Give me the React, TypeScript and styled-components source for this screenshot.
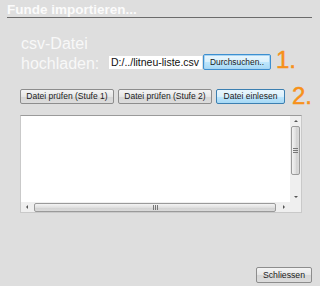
import React from "react";
import styled, { createGlobalStyle, css } from "styled-components";

const GlobalStyle = createGlobalStyle`
  html, body {
    margin: 0;
    padding: 0;
    background: #dedede;
  }
  body {
    font-family: "Liberation Sans", Arial, sans-serif;
  }
`;

const Dialog = styled.div`
  width: 320px;
  height: 286px;
  box-sizing: border-box;
  padding: 2px 8px 0 7px;
  display: flex;
  flex-direction: column;
  background: #dedede;
`;

const Title = styled.h1`
  margin: 0;
  font-size: 13.5px;
  line-height: 15px;
  font-weight: bold;
  color: #fbfbfb;
  border-bottom: 1px solid #6b6b6b;
`;

const UploadRow = styled.div`
  display: flex;
  align-items: flex-end;
  margin: 16px 0 0 14px;
`;

const UploadLabel = styled.div`
  font-size: 16px;
  line-height: 20px;
  color: #f8f8f8;
  width: 88px;
`;

const FileGroup = styled.div`
  display: flex;
  align-items: center;
  margin-bottom: 4px;
`;

const FileName = styled.div`
  width: 93px;
  height: 13px;
  box-sizing: border-box;
  background: #fff;
  font-size: 10.5px;
  line-height: 13px;
  padding-left: 2px;
  color: #111;
  white-space: nowrap;
  overflow: hidden;
`;

const buttonBase = css`
  box-sizing: border-box;
  font-family: "Liberation Sans", Arial, sans-serif;
  font-size: 8.5px;
  color: #1a1a1a;
  border: 1px solid #8d8d8d;
  border-radius: 2px;
  background: linear-gradient(#f4f4f4, #e6e6e6 50%, #d6d6d6 51%, #dcdcdc);
  padding: 0;
  white-space: nowrap;
`;

const BrowseButton = styled.button`
  ${buttonBase}
  width: 68px;
  height: 16px;
  margin-left: 1px;
  border: 1px solid #3d8fd0;
  box-shadow: inset 0 0 0 1px #a9d4f2;
  background: linear-gradient(#eaf6fd, #d9f0fc 50%, #bee6fd 51%, #a7d9f5);
  font-size: 8.4px;
`;

const StepNumber = styled.span`
  font-size: 24px;
  line-height: 24px;
  color: #f7911a;
  -webkit-text-stroke: 0.5px #f7911a;
  font-family: "Liberation Sans", Arial, sans-serif;
`;

const StepOne = styled(StepNumber)`
  margin: 0 0 2px 5px;
`;

const ActionRow = styled.div`
  display: flex;
  align-items: center;
  margin: 10px 0 0 13px;
  gap: 4px;
`;

const ActionButton = styled.button<{ $primary?: boolean }>`
  ${buttonBase}
  height: 15px;
  width: ${(p) => (p.$primary ? "69px" : "94px")};
  ${(p) =>
    p.$primary &&
    css`
      border-color: #3c7fb1;
      background: linear-gradient(#eaf6fd, #d9f0fc 50%, #bee6fd 51%, #a7d9f5);
    `}
`;

const StepTwo = styled(StepNumber)`
  margin-left: 3px;
`;

const Output = styled.div`
  margin: 7px 0 0 13px;
  width: 282px;
  height: 98px;
  box-sizing: border-box;
  border: 1px solid #c9c9c9;
  border-top-color: #9a9a9a;
  background: #fff;
  display: grid;
  grid-template-columns: 1fr 11px;
  grid-template-rows: 1fr 10px;
`;

const Track = styled.div<{ $vertical?: boolean }>`
  background: #efefef;
  display: flex;
  flex-direction: ${(p) => (p.$vertical ? "column" : "row")};
  align-items: center;
`;

const Corner = styled.div`
  background: #efefef;
`;

const Arrow = styled.span<{ $dir: "up" | "down" | "left" | "right" }>`
  width: 0;
  height: 0;
  flex: none;
  border: 2px solid transparent;
  ${(p) =>
    p.$dir === "up"
      ? css`
          border-bottom: 2px solid #555;
          border-top-width: 0;
          margin: 4px 0 0;
        `
      : p.$dir === "down"
        ? css`
            border-top: 2px solid #555;
            border-bottom-width: 0;
            margin: 0 0 4px;
          `
        : p.$dir === "left"
          ? css`
              border-right: 2px solid #555;
              border-left-width: 0;
              margin: 0 0 0 5px;
            `
          : css`
              border-left: 2px solid #555;
              border-right-width: 0;
              margin: 0 5px 0 0;
            `}
`;

const Thumb = styled.div<{ $vertical?: boolean }>`
  box-sizing: border-box;
  border: 1px solid #9a9a9a;
  border-radius: 2px;
  display: flex;
  align-items: center;
  justify-content: center;
  ${(p) =>
    p.$vertical
      ? css`
          width: 9px;
          height: 49px;
          margin: 4px 0 auto;
          background: linear-gradient(90deg, #f3f3f3, #e0e0e0 50%, #d2d2d2 51%, #dadada);
        `
      : css`
          height: 9px;
          width: 242px;
          margin: 0 auto 0 6px;
          background: linear-gradient(#f3f3f3, #e0e0e0 50%, #d2d2d2 51%, #dadada);
        `}
`;

const Grip = styled.span<{ $vertical?: boolean }>`
  width: 5px;
  height: 5px;
  background: ${(p) =>
    p.$vertical
      ? "repeating-linear-gradient(#777 0 1px, transparent 1px 2px)"
      : "repeating-linear-gradient(90deg, #777 0 1px, transparent 1px 2px)"};
`;

const Footer = styled.div`
  margin-top: auto;
  margin-bottom: 3px;
  display: flex;
  justify-content: flex-end;
`;

const CloseButton = styled.button`
  ${buttonBase}
  width: 56px;
  height: 16px;
  font-size: 8.7px;
`;

export default function App() {
  return (
    <>
      <GlobalStyle />
      <Dialog>
        <Title>Funde importieren...</Title>
        <UploadRow>
          <UploadLabel>
            csv-Datei
            <br />
            hochladen:
          </UploadLabel>
          <FileGroup>
            <FileName>D:/../litneu-liste.csv</FileName>
            <BrowseButton>Durchsuchen..</BrowseButton>
          </FileGroup>
          <StepOne>1.</StepOne>
        </UploadRow>
        <ActionRow>
          <ActionButton>Datei prüfen (Stufe 1)</ActionButton>
          <ActionButton>Datei prüfen (Stufe 2)</ActionButton>
          <ActionButton $primary>Datei einlesen</ActionButton>
          <StepTwo>2.</StepTwo>
        </ActionRow>
        <Output>
          <div />
          <Track $vertical>
            <Arrow $dir="up" />
            <Thumb $vertical>
              <Grip $vertical />
            </Thumb>
            <Arrow $dir="down" />
          </Track>
          <Track>
            <Arrow $dir="left" />
            <Thumb>
              <Grip />
            </Thumb>
            <Arrow $dir="right" />
          </Track>
          <Corner />
        </Output>
        <Footer>
          <CloseButton>Schliessen</CloseButton>
        </Footer>
      </Dialog>
    </>
  );
}
